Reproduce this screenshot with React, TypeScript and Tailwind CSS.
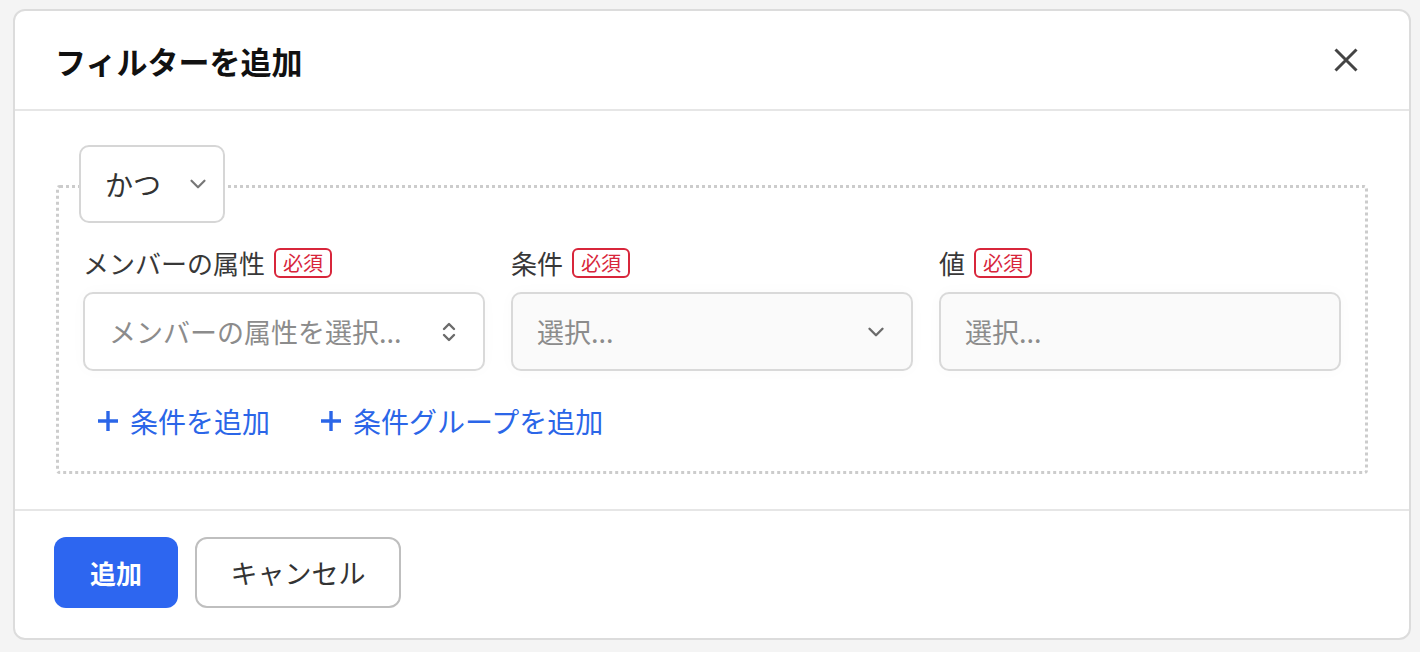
import { ChevronDown, ChevronsUpDown } from 'lucide-react'

const font = { fontFamily: '"Noto Sans CJK JP", "Noto Sans", sans-serif' }

function Required() {
  return (
    <span className="inline-flex items-center h-[30px] px-[7px] border-2 border-[#d8263b] rounded-[6px] text-[#d8263b] text-[20px] leading-none">
      必須
    </span>
  )
}

function Field({
  label,
  placeholder,
  disabled,
  icon,
}: {
  label: string
  placeholder: string
  disabled?: boolean
  icon?: 'updown' | 'down'
}) {
  return (
    <div className="flex flex-col gap-[14px]">
      <div className="flex items-center gap-[9px] h-[30px]">
        <span className="text-[26px] leading-none text-[#383838]">{label}</span>
        <Required />
      </div>
      <div
        className={`h-[79px] flex items-center justify-between pl-[24px] pr-[22px] border-2 border-[#d9d9d9] rounded-[10px] shadow-[0_0_16px_rgba(0,0,0,0.025)] ${
          disabled ? 'bg-[#fafafa]' : 'bg-white'
        }`}
      >
        <span className="text-[27px] leading-none text-[#8c8c8c]">{placeholder}</span>
        {icon === 'updown' && <ChevronsUpDown size={24} strokeWidth={2.4} className="text-[#6b6b6b]" />}
        {icon === 'down' && <ChevronDown size={26} strokeWidth={2.2} className="text-[#6b6b6b]" />}
      </div>
    </div>
  )
}

function PlusIcon() {
  return (
    <svg width="22" height="22" viewBox="0 0 22 22" aria-hidden>
      <path d="M11 1v20M1 11h20" stroke="currentColor" strokeWidth="3.4" />
    </svg>
  )
}

export default function App() {
  return (
    <div className="w-[1420px] h-[652px] bg-[#f4f4f4] overflow-hidden pt-[9px] pl-[13px]" style={font}>
      {/* ── Dialog ── */}
      <div className="w-[1398px] h-[631px] bg-white border-2 border-[#dcdcdc] rounded-[12px] flex flex-col">
        {/* Header */}
        <div className="h-[100px] shrink-0 border-b-2 border-[#e6e6e6] flex items-center justify-between pl-[40px] pr-[51px]">
          <h2 className="text-[31px] font-bold text-[#111] leading-none">フィルターを追加</h2>
          <svg width="24" height="24" viewBox="0 0 24 24" aria-hidden>
            <path d="M1.5 1.5l21 21M22.5 1.5l-21 21" stroke="#444" strokeWidth="3" />
          </svg>
        </div>

        {/* Body */}
        <div className="h-[398px] shrink-0 pt-[34px] px-[41px]">
          <div className="relative pt-[40px]">
            {/* Conjunction select sits over the dotted border */}
            <div className="absolute top-0 left-[23px] z-10 w-[146px] h-[78px] bg-white border-2 border-[#d6d6d6] rounded-[10px] flex items-center pl-[24px] gap-[24px]">
              <span className="text-[28px] leading-none text-[#333]">かつ</span>
              <ChevronDown size={26} strokeWidth={2} className="text-[#777]" />
            </div>

            <div className="h-[289px] border-[3px] border-dotted border-[#cccccc] rounded-[4px] pt-[60px] px-[24px]">
              <div className="grid grid-cols-3 gap-[26px]">
                <Field label="メンバーの属性" placeholder="メンバーの属性を選択..." icon="updown" />
                <Field label="条件" placeholder="選択..." disabled icon="down" />
                <Field label="値" placeholder="選択..." disabled />
              </div>

              <div className="flex items-center gap-[50px] mt-[36px] pl-[14px] text-[#2b66e8]">
                <button className="flex items-center gap-[11px]">
                  <PlusIcon />
                  <span className="text-[28px] leading-none">条件を追加</span>
                </button>
                <button className="flex items-center gap-[11px]">
                  <PlusIcon />
                  <span className="text-[28px] leading-none">条件グループを追加</span>
                </button>
              </div>
            </div>
          </div>
        </div>

        {/* Footer */}
        <div className="flex-1 border-t-2 border-[#e6e6e6] pt-[26px] pl-[39px] flex items-start gap-[17px]">
          <button className="w-[124px] h-[71px] bg-[#2d66f0] rounded-[12px] text-white font-bold text-[26px] leading-none">
            追加
          </button>
          <button className="w-[206px] h-[71px] bg-white border-2 border-[#bfbfbf] rounded-[12px] text-[#333] text-[27px] leading-none">
            キャンセル
          </button>
        </div>
      </div>
    </div>
  )
}
